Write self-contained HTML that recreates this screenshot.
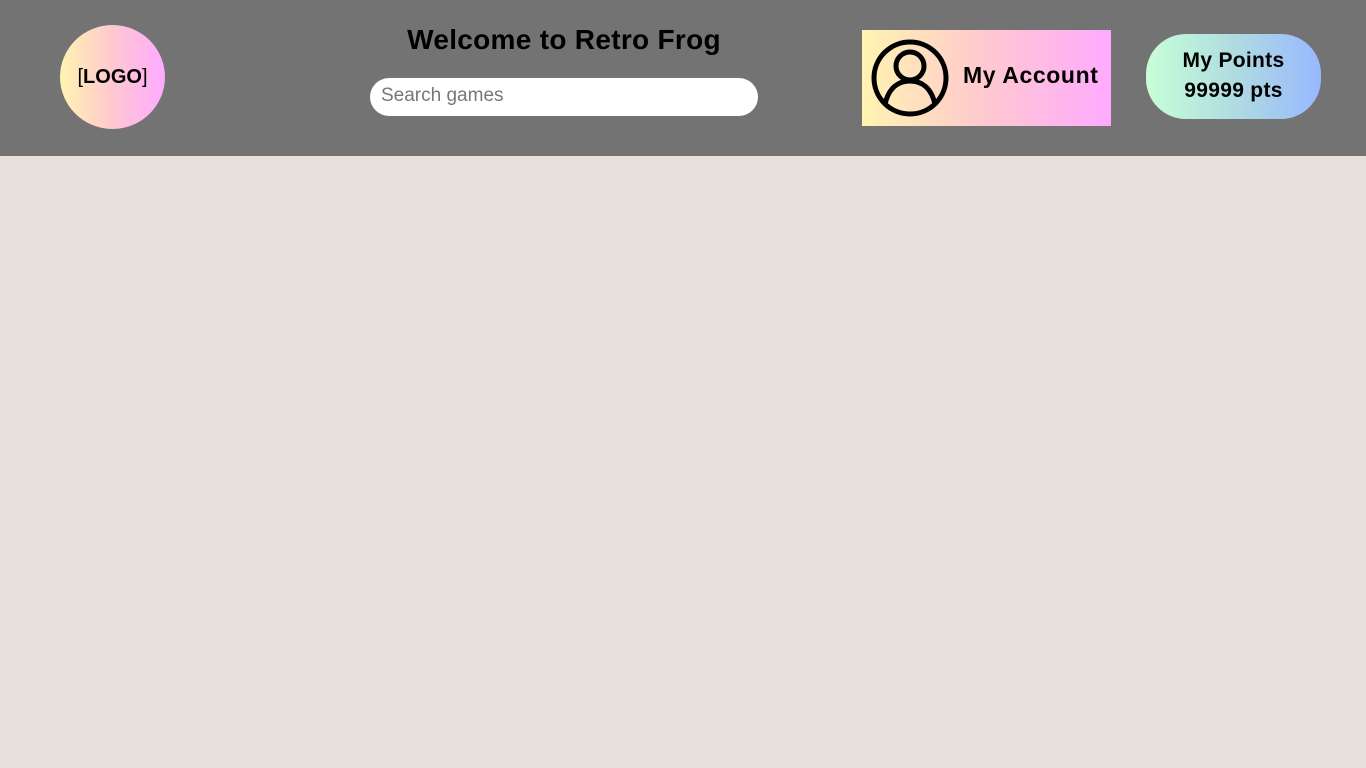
<!DOCTYPE html>
<html><head><style>
body{margin:0;width:1366px;height:768px;background:#e6dfda;font-family:"Liberation Sans",sans-serif;overflow:hidden}
header{position:absolute;left:0;top:0;width:1366px;height:156px;background:#737373}
.logo{position:absolute;left:60px;top:25px;width:105px;height:104px;border-radius:50%;background:linear-gradient(90deg,#fff4b0,#ffc8d0,#ffaaff);display:flex;align-items:center;justify-content:center;font-weight:bold;font-size:20px;color:#000}
.logo span{font-weight:normal}
h1{position:absolute;left:364px;width:400px;top:24px;margin:0;text-align:center;font-size:28px;font-weight:bold;color:#000;letter-spacing:0.3px}
.search{position:absolute;left:370px;top:78px;width:388px;height:38px;border-radius:19px;background:#fff;box-sizing:border-box;padding-left:11px;line-height:36px;font-size:19px;color:#777}
.acct{position:absolute;left:862px;top:30px;width:249px;height:96px;background:linear-gradient(90deg,#fff4b0,#ffc8d0,#ffaaff)}
.acct svg{position:absolute;left:9px;top:9px}
.acct div{position:absolute;left:101px;top:32px;font-weight:bold;font-size:23px;color:#000;letter-spacing:0.6px}
.pts{position:absolute;left:1146px;top:34px;width:175px;height:85px;border-radius:40px;background:linear-gradient(90deg,#c8ffd8,#b0dce0,#98b8ff);text-align:center;font-weight:bold;font-size:21px;line-height:30px;color:#000;padding-top:12px;box-sizing:border-box;letter-spacing:0.3px}
</style></head><body>
<header>
<div class="logo"><span>[</span>LOGO<span>]</span></div>
<h1>Welcome to Retro Frog</h1>
<div class="search">Search games</div>
<div class="acct"><svg width="78" height="78" viewBox="0 0 78 78"><circle cx="39" cy="39" r="36" fill="none" stroke="#000" stroke-width="5"/><circle cx="39" cy="27" r="14" fill="none" stroke="#000" stroke-width="5"/><path d="M14 65 C18 48 28 42 39 42 C50 42 60 48 64 65" fill="none" stroke="#000" stroke-width="5"/></svg><div>My Account</div></div>
<div class="pts">My Points<br>99999 pts</div>
</header>
</body></html>
